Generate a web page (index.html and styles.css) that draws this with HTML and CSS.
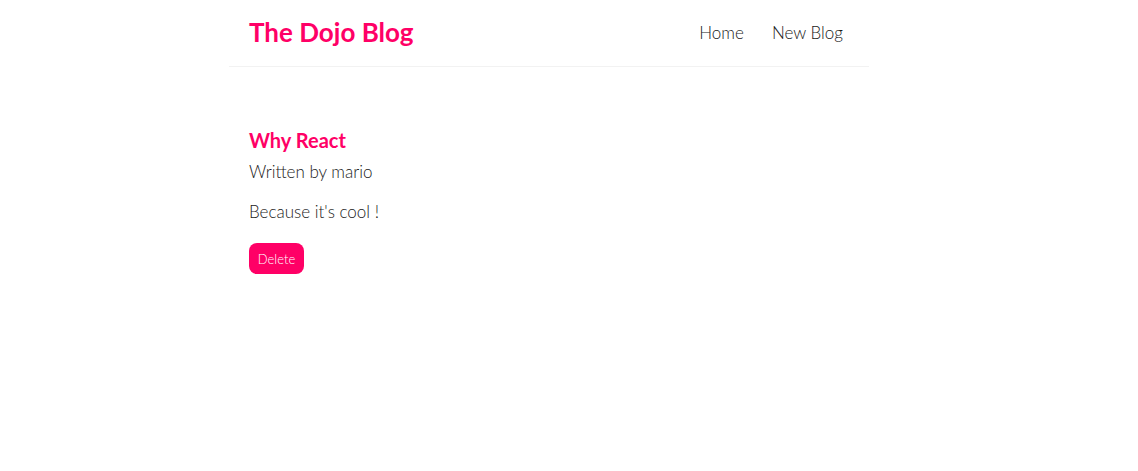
FILE: index.html
```html
<!DOCTYPE html>
<html lang="en">
<head>
<meta charset="utf-8">
<title>The Dojo Blog</title>
<link rel="stylesheet" href="styles.css">
</head>
<body>
<div class="app">
  <nav class="navbar">
    <h1>The Dojo Blog</h1>
    <div class="links">
      <a href="#">Home</a>
      <a href="#">New Blog</a>
    </div>
  </nav>
  <div class="content">
    <article class="blog-details">
      <h2>Why React</h2>
      <p class="author">Written by mario</p>
      <div class="body">Because it's cool !</div>
      <button class="delete">Delete</button>
    </article>
  </div>
</div>
</body>
</html>
```

FILE: styles.css
```css
* {
  margin: 0;
  font-family: "Lato", "Open Sans", sans-serif;
  color: #333;
}
body {
  margin: 0;
  padding-right: 40px;
  background: #fff;
}
.navbar {
  box-sizing: content-box;
  max-width: 600px;
  margin: 0 auto;
  padding: 12px 20px 14px;
  display: flex;
  align-items: center;
  border-bottom: 1px solid #f2f2f2;
}
.navbar h1 {
  color: #ff0066;
  font-size: 26px;
  font-weight: 700;
  line-height: 40px;
}
.links {
  margin-left: auto;
  display: flex;
}
.links a {
  margin-left: 16px;
  padding: 6px;
  text-decoration: none;
  font-size: 17px;
  font-weight: 300;
  color: #1a1a1a;
}
.content {
  max-width: 600px;
  margin: 40px auto;
  padding: 20px;
}
.blog-details h2 {
  color: #ff0066;
  font-size: 20px;
  font-weight: 700;
  line-height: 26px;
}
.author {
  font-size: 17px;
  font-weight: 300;
  line-height: 24px;
  margin-top: 7px;
  color: #1a1a1a;
}
.body {
  font-size: 17px;
  font-weight: 300;
  line-height: 24px;
  margin: 16px 0 19px;
  color: #1a1a1a;
}
.delete {
  background: #ff0066;
  color: #fff;
  border: 0;
  padding: 8px;
  border-radius: 8px;
  font-size: 13px;
  font-weight: 300;
  height: 31px;
  width: 55px;
  cursor: pointer;
}
```
